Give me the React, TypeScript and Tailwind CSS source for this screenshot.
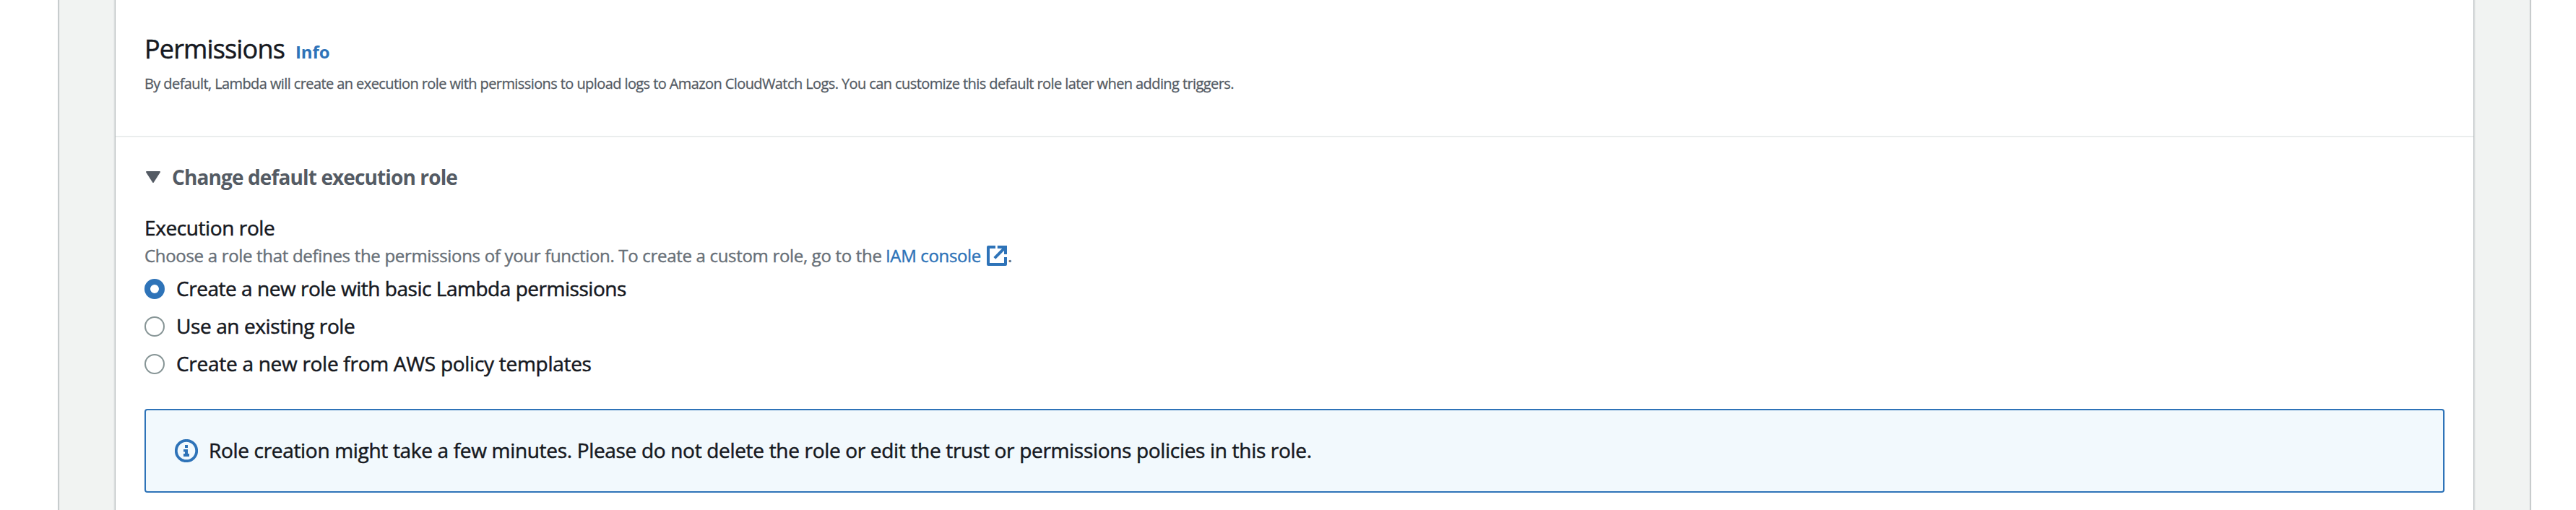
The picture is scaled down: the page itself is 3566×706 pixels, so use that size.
import { useState } from "react";

function Gutter() {
  return (
    <div className="w-20 shrink-0 border-x border-[#b7bcbe] bg-[#f1f3f2] shadow-[inset_1px_0_0_#d9dddd,inset_-1px_0_0_#d9dddd,inset_2px_0_0_#e9ebeb,inset_-2px_0_0_#e9ebeb]" />
  );
}

function ExternalIcon() {
  return (
    <svg viewBox="0 0 16 16" className="size-8 shrink-0" fill="none" stroke="currentColor" strokeWidth="2">
      <path d="M7 2H2v12h12V9" strokeLinejoin="round" />
      <path d="M8.4 2H14v5M14 2l-7.6 7.7" />
    </svg>
  );
}

function InfoIcon() {
  return (
    <svg viewBox="0 0 16 16" className="size-8 shrink-0 text-[#2e73b8]">
      <circle cx="8" cy="8" r="7.1" fill="none" stroke="currentColor" strokeWidth="1.9" />
      <path d="M7 4h2v2H7zM6 7h3v3h1v2H6v-2h1V8.7H6z" fill="currentColor" />
    </svg>
  );
}

const roles = [
  { label: "Create a new role with basic Lambda permissions", tracking: "tracking-[-0.47px]" },
  { label: "Use an existing role", tracking: "tracking-[-0.4px]" },
  { label: "Create a new role from AWS policy templates", tracking: "tracking-[-0.28px]" },
];

export default function App() {
  const [selected, setSelected] = useState(0);
  return (
    <div className="flex h-[706px] w-[3566px] overflow-hidden bg-white pl-20 font-['Open_Sans','Noto_Sans',sans-serif] text-[28px] leading-10 text-[#16191f] [-webkit-text-stroke:0.5px_currentColor]">
      <Gutter />
      <main className="w-[3264px] shrink-0">
        <header className="h-[190px] border-b-2 border-[#eaeded] px-10 pt-[46px]">
          <div className="flex items-baseline">
            <h2 className="w-[209px] text-4xl leading-[44px] tracking-[-0.85px] whitespace-nowrap">Permissions</h2>
            <a className="text-2xl font-bold tracking-[-0.1px] text-[#2e73b8] [-webkit-text-stroke:0]">Info</a>
          </div>
          <p className="mt-[11px] text-xl leading-[30px] tracking-[-0.59px] whitespace-nowrap text-[#545b64] [-webkit-text-stroke:0.3px_#545b64]">
            By default, Lambda will create an execution role with permissions to upload logs to Amazon CloudWatch Logs. You can customize this default role later when adding triggers.
          </p>
        </header>
        <section className="px-10 pt-[35px]">
          <h3 className="flex items-center font-bold tracking-[-0.88px] text-[#545b64] [-webkit-text-stroke:0]">
            <svg viewBox="0 0 20 16" className="mr-4 ml-0.5 h-4 w-5" fill="currentColor" stroke="currentColor" strokeWidth="2" strokeLinejoin="round">
              <path d="M1 1h18L10 15z" />
            </svg>
            Change default execution role
          </h3>
          <h4 className="mt-[30px] tracking-[-0.4px]">Execution role</h4>
          <p className="mt-px flex h-9 items-center text-2xl leading-9 whitespace-nowrap text-[#687078] [-webkit-text-stroke:0.4px_#687078]">
            <span className="w-[1026px] tracking-[-0.31px]">
              Choose a role that defines the permissions of your function. To create a custom role, go to the
            </span>
            <a className="flex items-center text-[#2e73b8] [-webkit-text-stroke:0.4px_#2e73b8]">
              <span className="w-[138px] tracking-[-0.35px]">IAM console</span>
              <ExternalIcon />
            </a>
            <span className="-ml-px">.</span>
          </p>
          <div className="mt-[7px] flex flex-col gap-3" role="radiogroup">
            {roles.map(({ label, tracking }, i) => (
              <label key={label} className={`flex items-center gap-4 ${tracking}`} onClick={() => setSelected(i)}>
                <span
                  className={
                    i === selected
                      ? "mt-0.5 size-7 rounded-full border-8 border-[#2e73b8] bg-white"
                      : "mt-0.5 size-7 rounded-full border-2 border-[#879596] bg-white"
                  }
                />
                {label}
              </label>
            ))}
          </div>
          <div className="mt-[43px] flex h-[116px] w-[3184px] items-center gap-[15px] rounded border-2 border-[#2e73b8] bg-[#f2f9fd] pl-10">
            <InfoIcon />
            <span className="-mt-0.5 tracking-[-0.32px]">
              Role creation might take a few minutes. Please do not delete the role or edit the trust or permissions policies in this role.
            </span>
          </div>
        </section>
      </main>
      <Gutter />
    </div>
  );
}
